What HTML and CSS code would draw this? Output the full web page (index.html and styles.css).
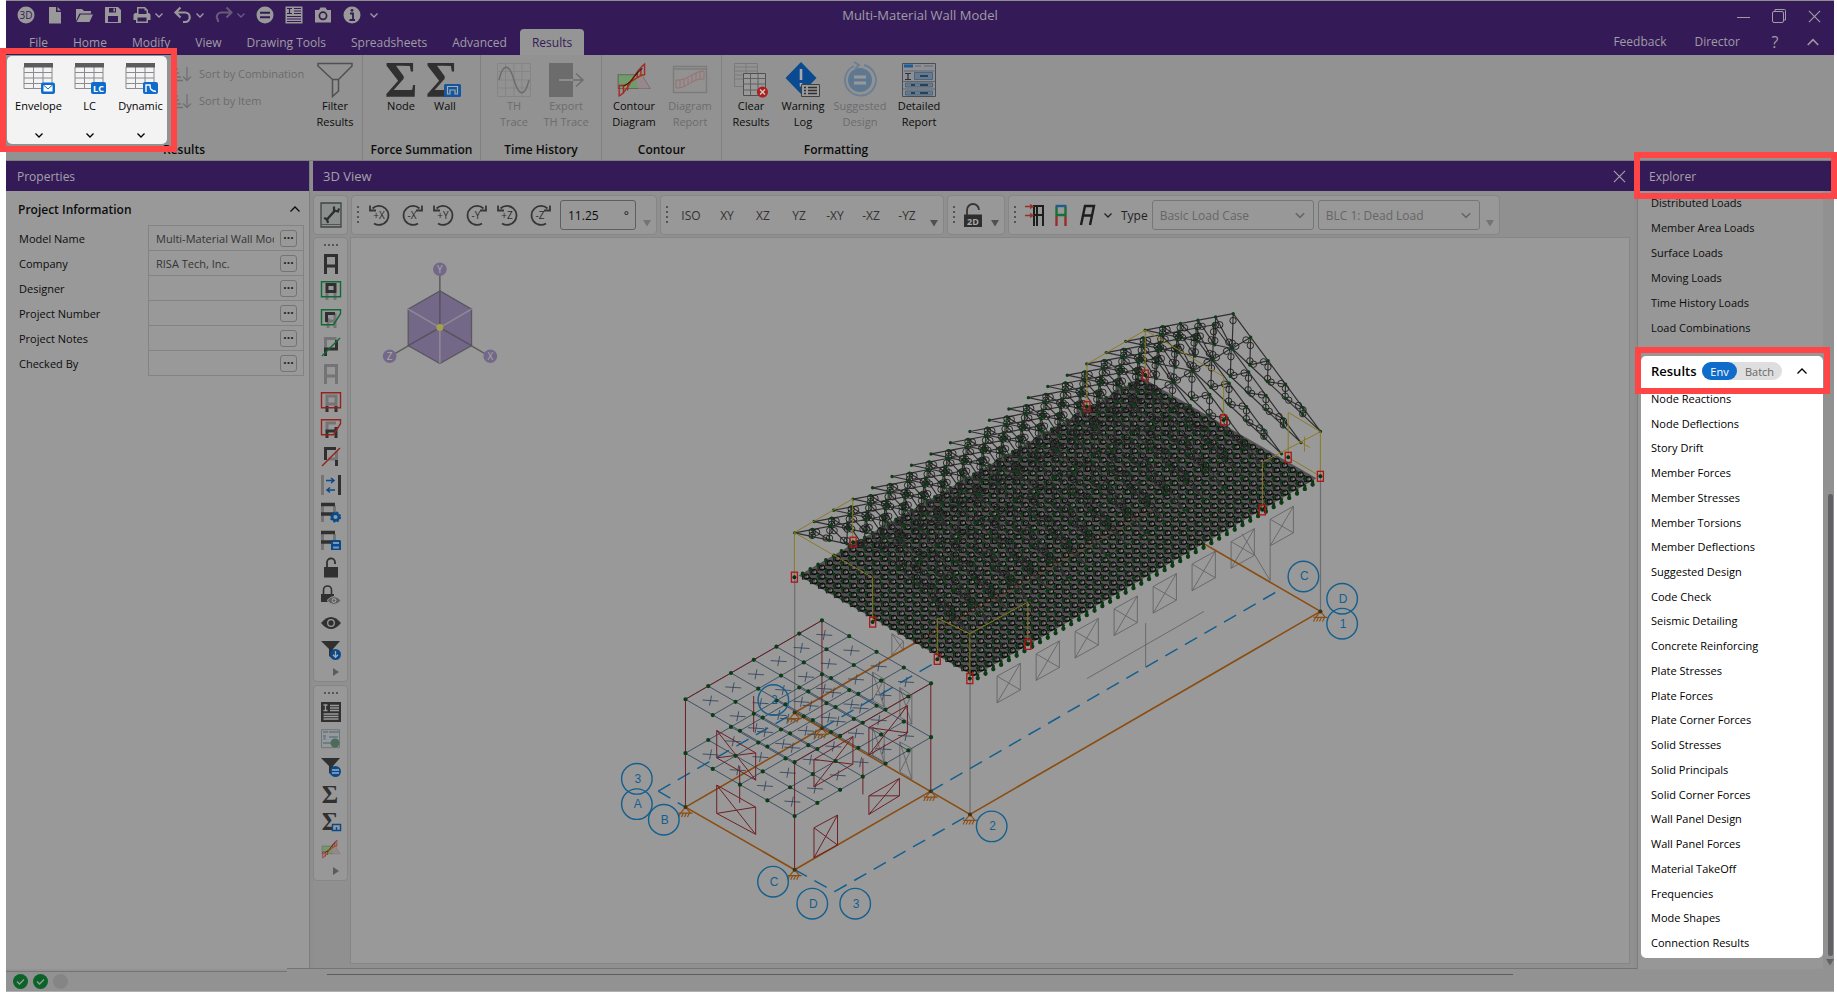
FILE: index.html
```html
<!DOCTYPE html>
<html lang="en">
<head>
<meta charset="utf-8">
<title>Multi-Material Wall Model</title>
<link rel="stylesheet" href="styles.css">
</head>
<body>
<svg class="defs" aria-hidden="true">
  <symbol id="chev" viewBox="0 0 10 10"><path d="M1.500 3.500 5 7l3.500-3.500" fill="none" stroke="currentColor" stroke-width="1.300"/></symbol>
  <symbol id="chev-up" viewBox="0 0 12 12"><path d="M1.500 8.500 6 4l4.500 4.500" fill="none" stroke="currentColor" stroke-width="1.300"/></symbol>
  <symbol id="close" viewBox="0 0 14 14"><path d="M1 1l12 12M13 1 1 13" fill="none" stroke="currentColor" stroke-width="1.200"/></symbol>
  <symbol id="more" viewBox="0 0 8 8"><path d="M0 1h8L4 7.500z" fill="currentColor"/></symbol>
  <symbol id="table" viewBox="0 0 34 34"><path d="M2 6v21.500h28V6M2 11.500h28M2 17h28M2 22.500h28M11.500 6v21.500M21 6v21.500" fill="none" stroke="#8a8a90"/><path d="M2 2h29v4.500H2z" fill="#5c5c5c"/></symbol>
  <symbol id="ccw" viewBox="0 0 24 24"><path d="M4.500 5.500A9.500 9.500 0 1 1 6 20.500M2 2.500v5h6" fill="none" stroke="#363636" stroke-width="1.800"/></symbol>
  <symbol id="cw" viewBox="0 0 24 24"><path d="M19.500 5.500A9.500 9.500 0 1 0 18 20.500M22 2.500v5h-6" fill="none" stroke="#363636" stroke-width="1.800"/></symbol>
  <symbol id="contour" viewBox="0 0 32 34"><path d="M1 12h22l8 13H1z" fill="#6f9c6a" stroke="#68635c"/><path d="M17 12h6l8 13H20z" fill="#98888e"/><path d="M8 25c3-6 9-12 17-13" stroke="#a09a50" stroke-width="3" fill="none"/><path d="M2 22v10c9-4 13-22 24-30v10C18 12 12 24 2 22M6 22v8M10 20v7M19 9v6M22.500 5v8" fill="none" stroke="#a52828" stroke-width="1.300"/><path d="M6 23C15 19 15 12 24 6" stroke="#2b1a1a" fill="none"/></symbol>
</svg>
<div class="app">
  <header class="titlebar">
    <div class="qat">
      <button aria-label="RISA-3D"><svg width="18" height="18" viewBox="0 0 18 18"><circle cx="9" cy="9" r="8.500" fill="#999"/><text x="9" y="13" class="i3d">3D</text></svg></button>
      <button aria-label="New"><svg width="18" height="18" viewBox="0 0 18 18"><path d="M3 1h7v5h5v11.500H3zM11.500 1 15 4.500h-3.500z" fill="#999"/></svg></button>
      <button aria-label="Open"><svg width="18" height="18" viewBox="0 0 18 18"><path d="M1 15V3h6l2 2h7v2.500H4.500zM5.500 8.500H18L14.500 16H1.500z" fill="#999"/></svg></button>
      <button aria-label="Save"><svg width="18" height="18" viewBox="0 0 18 18"><path fill-rule="evenodd" d="M1 1h13l3 3v13H1zM5 2v4.500h7V2zM4 10v6h10v-6z" fill="#999"/><path d="M9.500 2.500h1.500v3H9.500z" fill="#999"/></svg></button>
      <span class="split"><button aria-label="Print"><svg width="18" height="18" viewBox="0 0 18 18"><path fill-rule="evenodd" d="M4 1h8l3 3v3h1l1.500 1.500V14H15v3H3v-3H.500V8.500L2 7h2zM5.500 2.500V8h8V4.500h-2v-2zM4.500 11.500v4h9v-4z" fill="#999"/></svg></button><button class="drop" aria-label="Print options"><svg width="10" height="10"><use href="#chev"/></svg></button></span>
      <span class="split"><button aria-label="Undo"><svg width="18" height="18" viewBox="0 0 18 18"><path d="M2 6.500h9a4.500 4.500 0 0 1 0 9.500H9M6.500 1.500l-5 5 5 5" fill="none" stroke="#999" stroke-width="2.200"/></svg></button><button class="drop" aria-label="Undo history"><svg width="10" height="10"><use href="#chev"/></svg></button></span>
      <span class="split dim"><button aria-label="Redo"><svg width="18" height="18" viewBox="0 0 18 18"><path d="M16 6.500H7A4.500 4.500 0 0 0 3 14v2M11.500 1.500l5 5-5 5" fill="none" stroke="#999" stroke-width="2"/></svg></button><button class="drop" aria-label="Redo history"><svg width="10" height="10"><use href="#chev"/></svg></button></span>
      <button aria-label="Solve"><svg width="18" height="18" viewBox="0 0 18 18"><circle cx="9" cy="9" r="8.500" fill="#999"/><path d="M4 6.800h10M4 11.200h10" stroke="#341b57" stroke-width="2"/></svg></button>
      <button aria-label="Report"><svg width="18" height="18" viewBox="0 0 18 18"><path d="M.500.500h17v17H.500z" fill="#999"/><path d="M2 2.500h5M2 7.500h5M4.500 2.500v5M9 2.500h7M9 5h7M9 7.500h7M2 10.500h14M2 13h14M2 15.500h14" stroke="#341b57" stroke-width="1.200"/></svg></button>
      <button aria-label="Snapshot"><svg width="18" height="18" viewBox="0 0 18 18"><path d="M1 4h4l1.500-2.500h5L13 4h4v12.500H1z" fill="#999"/><circle cx="9" cy="9.800" r="3.600" fill="none" stroke="#341b57" stroke-width="1.700"/></svg></button>
      <button aria-label="Information"><svg width="18" height="18" viewBox="0 0 18 18"><circle cx="9" cy="9" r="8.500" fill="#999"/><path d="M7 7.500h3v6M6.500 14h5.500" stroke="#341b57" stroke-width="1.800" fill="none"/><circle cx="9" cy="4.300" r="1.400" fill="#341b57"/></svg></button>
      <button class="drop" aria-label="Customize toolbar"><svg width="10" height="10"><use href="#chev"/></svg></button>
    </div>
    <h1>Multi-Material Wall Model</h1>
    <div class="winbtns">
      <button aria-label="Minimize"><svg width="14" height="14"><path d="M0 8.500h13" stroke="currentColor"/></svg></button>
      <button aria-label="Restore"><svg width="16" height="16" viewBox="0 0 16 16" fill="none" stroke="currentColor"><rect x="1.500" y="3.500" width="11" height="11" rx="1.500"/><path d="M4 3V1.500h9.500a1 1 0 0 1 1 1V12H13"/></svg></button>
      <button aria-label="Close"><svg width="13" height="13"><use href="#close"/></svg></button>
    </div>
  </header>
  <nav class="tabs">
    <a href="#file">File</a><a href="#home">Home</a><a href="#modify">Modify</a><a href="#view">View</a><a href="#draw">Drawing Tools</a><a href="#sheets">Spreadsheets</a><a href="#advanced">Advanced</a><a href="#results" class="active">Results</a>
    <span class="tabs-right"><a href="#feedback">Feedback</a><a href="#director">Director</a><button class="help" aria-label="Help">?</button><button aria-label="Collapse ribbon"><svg width="14" height="14"><use href="#chev-up"/></svg></button></span>
  </nav>

  <section class="ribbon">
    <div class="group g-results">
      <div class="tools">
        <div class="spot">
          <button><svg width="34" height="34"><use href="#table"/><g><rect x="19" y="21.500" width="14" height="11.500" rx="2" fill="#0f6ccb"/><path d="M21.500 24h9v6.500h-9z" fill="#fff"/><path d="M21.500 24l4.500 4 4.500-4" fill="none" stroke="#0f6ccb"/></g></svg><span>Envelope</span><svg class="dd" width="10" height="10"><use href="#chev"/></svg></button>
          <button><svg width="34" height="34"><use href="#table"/><rect x="18" y="21" width="15" height="12" rx="2" fill="#0f6ccb"/><text x="25.500" y="30.500" class="lc">LC</text></svg><span>LC</span><svg class="dd" width="10" height="10"><use href="#chev"/></svg></button>
          <button><svg width="34" height="34"><use href="#table"/><rect x="19" y="21" width="15" height="12" rx="2" fill="#0f6ccb"/><path d="M22 31v-7h4c0 4 1 6 6 6.500" fill="none" stroke="#fff" stroke-width="1.400"/></svg><span>Dynamic</span><svg class="dd" width="10" height="10"><use href="#chev"/></svg></button>
        </div>
        <div class="sorts">
          <button disabled><svg width="16" height="16"><path d="M0 3h3M0 7h4M0 11h6M0 14.500h8M12 1v13M8 10.500l4 4 4-4" fill="none" stroke="#717171" stroke-width="1.300"/></svg>Sort by Combination</button>
          <button disabled><svg width="16" height="16"><path d="M0 3h3M0 7h4M0 11h6M0 14.500h8M12 1v13M8 10.500l4 4 4-4" fill="none" stroke="#717171" stroke-width="1.300"/></svg>Sort by Item</button>
        </div>
        <button><svg width="36" height="36" viewBox="0 0 36 36"><path d="M1 1.500h34v2.500L21.500 17.500V29l-6 5.500v-17L1 4zM15.500 17.500h6" fill="none" stroke="#505050" stroke-width="1.500"/></svg><span>Filter<br>Results</span></button>
      </div>
      <h2>Results</h2>
    </div>
    <div class="group g-force">
      <div class="tools">
        <button><svg width="34" height="36"><text x="17" y="34" class="sigma">Σ</text></svg><span>Node</span></button>
        <button><svg width="34" height="36"><text x="14" y="34" class="sigma">Σ</text><rect x="16" y="22" width="17" height="13" rx="1.500" fill="#1356a0"/><path d="M19.500 32v-7.500h10V32H27v-4h-5v4z" fill="none" stroke="#aaa" stroke-width="1.200"/></svg><span>Wall</span></button>
      </div>
      <h2>Force Summation</h2>
    </div>
    <div class="group g-time">
      <div class="tools">
        <button disabled><svg width="36" height="36" viewBox="0 0 36 36"><path d="M1.500 1.500h33v33h-33zM9.500 2v32M18 2v32M26 2v32M2 9.500h32M2 18h32M2 26h32" fill="none" stroke="#858585"/><path d="M3 18C7 1 13 1 18 18s11 17 15 0" fill="none" stroke="#6c6c6c" stroke-width="1.500"/></svg><span>TH<br>Trace</span></button>
        <button disabled><svg width="36" height="36" viewBox="0 0 36 36"><path d="M1 1h24v34H1z" fill="#6c6c6c"/><path d="M11 18h14" stroke="#999" stroke-width="1.500"/><path d="M25 18h9M28 11.500l7 6.500-7 6.500" fill="none" stroke="#6c6c6c" stroke-width="1.500"/></svg><span>Export<br>TH Trace</span></button>
      </div>
      <h2>Time History</h2>
    </div>
    <div class="group g-contour">
      <div class="tools">
        <button><svg width="36" height="36"><use href="#contour"/></svg><span>Contour<br>Diagram</span></button>
        <button disabled><svg width="36" height="36" viewBox="0 0 36 36"><path d="M1.500 4.500h33v26h-33zM1.500 7h33" fill="none" stroke="#7c7c7c" stroke-width="1.400"/><path d="M4 18v8c11 1 16-10 28-9V9c-11 0-16 10-28 9M8 18v8M12 17v8M16 16v7M20 13v7M24 11v7M28 10v7" fill="none" stroke="#98706f"/></svg><span>Diagram<br>Report</span></button>
      </div>
      <h2>Contour</h2>
    </div>
    <div class="group g-format">
      <div class="tools">
        <button><svg width="36" height="36" viewBox="0 0 36 36"><path d="M1.500 1.500h23v23h-23zM2 5h22M2 9h22M2 13h22M2 17h22M13 2v22" fill="none" stroke="#7b7b7b"/><path d="M10.500 11.500h22v22h-22z" fill="#999" stroke="#505050"/><path d="M10.500 16.500h22M10.500 22h22M10.500 28h22M17.500 12v21M25 12v21" stroke="#606060"/><circle cx="29.500" cy="30" r="5.500" fill="#ae1c1c"/><path d="M27 27.500l5 5m0-5-5 5" stroke="#ccc" stroke-width="1.400"/></svg><span>Clear<br>Results</span></button>
        <button><svg width="36" height="36" viewBox="0 0 36 36"><path d="M16 0l15.500 16L16 32 .500 16z" fill="#0a4a90"/><path d="M16 7v11M16 21v3.500" stroke="#aaa" stroke-width="2.600"/><path d="M16.500 22.500h18v12h-18z" fill="#999" stroke="#404040"/><path d="M19 25.500h2M23 25.500h9M19 28.500h2M23 28.500h9M19 31.500h2M23 31.500h9" stroke="#303030" stroke-width="1.500"/></svg><span>Warning<br>Log</span></button>
        <button disabled><svg width="36" height="36" viewBox="0 0 36 36"><circle cx="18" cy="18" r="12" fill="#5f7892"/><path d="M12 15h12M12 21h12" stroke="#999" stroke-width="3.200"/><path d="M22 3A15.500 15.500 0 1 1 12 4M12 0l5 3-4 4M24 33l-4 .5" fill="none" stroke="#6b7f93" stroke-width="1.800"/></svg><span>Suggested<br>Design</span></button>
        <button><svg width="36" height="36" viewBox="0 0 36 36"><path d="M1.500 1.500h33v33h-33z" fill="#8c9096" stroke="#4a4e52"/><path d="M3 4h9" stroke="#1d5c94" stroke-width="3"/><path d="M14 4h6M23 4h9M3 9h30M2 19.500h32M2 27h32" stroke="#62666a"/><path d="M4 11.500h6M4 17.500h6M7 11.500v6" stroke="#333" stroke-width="1.200"/><path d="M13.500 10.500h18v7h-18zM4.500 21h27v4h-27zM4.500 29h27v4h-27z" fill="#667b90" stroke="#4e6478"/><path d="M19 14h8M10 23h4M19 23h8M10 31h4M19 31h8" stroke="#26415c" stroke-width="2"/></svg><span>Detailed<br>Report</span></button>
      </div>
      <h2>Formatting</h2>
    </div>
  </section>

  <main class="work">
    <section class="properties">
      <h2 class="bar">Properties</h2>
      <div class="sub"><h3>Project Information</h3><button aria-label="Collapse"><svg width="12" height="12"><use href="#chev-up"/></svg></button></div>
      <div class="prop"><label for="p1">Model Name</label><div><input id="p1" value="Multi-Material Wall Model"><button aria-label="Edit model name">···</button></div></div>
      <div class="prop"><label for="p2">Company</label><div><input id="p2" value="RISA Tech, Inc."><button aria-label="Edit company">···</button></div></div>
      <div class="prop"><label for="p3">Designer</label><div><input id="p3"><button aria-label="Edit designer">···</button></div></div>
      <div class="prop"><label for="p4">Project Number</label><div><input id="p4"><button aria-label="Edit project number">···</button></div></div>
      <div class="prop"><label for="p5">Project Notes</label><div><input id="p5"><button aria-label="Edit project notes">···</button></div></div>
      <div class="prop"><label for="p6">Checked By</label><div><input id="p6"><button aria-label="Edit checked by">···</button></div></div>
    </section>

    <section class="view">
      <div class="bar"><h2>3D View</h2><button aria-label="Close view"><svg width="13" height="13"><use href="#close"/></svg></button></div>
      <div class="toolrow">
        <div class="box wrench"><button aria-label="Settings"><svg width="22" height="26" viewBox="0 0 22 26"><path d="M1 1h20v24H1z" fill="#89908d" stroke="#3f4443" stroke-width="1.300"/><path d="M1 22.500h20" stroke="#555"/><path d="M6 18.500 15.500 8" stroke="#2e2e2e" stroke-width="2.400"/><path d="M14 4.500v4l4 1 1-3M4 16l3 1 1 4" fill="none" stroke="#2e2e2e" stroke-width="2.200"/></svg></button></div>
        <div class="box rot"><i class="grip"></i>
          <button aria-label="Rotate +X"><svg width="24" height="26"><use href="#ccw" width="24" height="24" y="1"/><text x="11" y="17" class="ax">+X</text></svg></button>
          <button aria-label="Rotate -X"><svg width="24" height="26"><use href="#cw" width="24" height="24" y="1"/><text x="12" y="17" class="ax">-X</text></svg></button>
          <button aria-label="Rotate +Y"><svg width="24" height="26"><use href="#ccw" width="24" height="24" y="1"/><text x="11" y="17" class="ax">+Y</text></svg></button>
          <button aria-label="Rotate -Y"><svg width="24" height="26"><use href="#cw" width="24" height="24" y="1"/><text x="12" y="17" class="ax">-Y</text></svg></button>
          <button aria-label="Rotate +Z"><svg width="24" height="26"><use href="#ccw" width="24" height="24" y="1"/><text x="11" y="17" class="ax">+Z</text></svg></button>
          <button aria-label="Rotate -Z"><svg width="24" height="26"><use href="#cw" width="24" height="24" y="1"/><text x="12" y="17" class="ax">-Z</text></svg></button>
          <label class="angle"><input value="11.25" aria-label="Rotation angle">°</label>
          <svg class="more faint" width="8" height="8"><use href="#more"/></svg>
        </div>
        <div class="box planes"><i class="grip"></i><button>ISO</button><button>XY</button><button>XZ</button><button>YZ</button><button>-XY</button><button>-XZ</button><button>-YZ</button><svg class="more" width="8" height="8"><use href="#more"/></svg></div>
        <div class="box lock"><i class="grip"></i><button aria-label="Lock 2D"><svg width="20" height="26" viewBox="0 0 20 26"><path d="M4 14V8a6 6 0 0 1 12 0" fill="none" stroke="#363636" stroke-width="1.800"/><path d="M1 12.500h18V25H1z" fill="#2e2e2e"/><text x="10" y="22.500" class="t2d">2D</text></svg></button><svg class="more" width="8" height="8"><use href="#more"/></svg></div>
        <div class="box loads"><i class="grip"></i>
          <button aria-label="Show loads"><svg width="20" height="22" viewBox="0 0 20 22" fill="none"><path d="M9 22V2h9v20M9 11h9M12 2v20" stroke="#1d1d1d" stroke-width="2"/><path d="M0 2.500h8M5 .500l3 2-3 2M0 11.500h8M5 9.500l3 2-3 2" stroke="#953029" stroke-width="1.300"/></svg></button>
          <button aria-label="Color by material"><svg width="20" height="22" viewBox="0 0 20 22" fill="none" stroke-width="2.400"><path d="M5.500 22V12M14.500 22V12" stroke="#953029"/><path d="M5.500 12V3M14.500 12V3M5 11h10" stroke="#17703a"/><path d="M4.500 2h11" stroke="#1f5a92"/></svg></button>
          <button aria-label="Rendering"><svg width="20" height="22" viewBox="0 0 20 22" fill="none"><path d="M4 21 8 2h9l-4 19M6 11.500h9" stroke="#1d1d1d" stroke-width="2.400"/></svg></button>
          <button class="tiny" aria-label="Rendering options"><svg width="10" height="10"><use href="#chev"/></svg></button>
          <label for="type">Type</label>
          <span class="sel"><select id="type" disabled><option>Basic Load Case</option></select><svg width="12" height="12"><use href="#chev"/></svg></span>
          <span class="sel"><select aria-label="Load case" disabled><option>BLC 1: Dead Load</option></select><svg width="12" height="12"><use href="#chev"/></svg></span>
          <svg class="more faint" width="8" height="8"><use href="#more"/></svg>
        </div>
      </div>
      <div class="stage">
        <div class="side">
          <div class="vbox tall" id="side1"><i class="hgrip"></i></div>
          <div class="vbox short" id="side2"><i class="hgrip"></i></div>
        </div>
        <div class="canvas"><svg id="scene" viewBox="350 237 1280 726" role="img" aria-label="Isometric wall model"></svg></div>
      </div>
    </section>

    <aside class="explorer">
      <div class="exp-head"><h2 class="bar">Explorer</h2></div>
      <div class="exp-body">
        <ul class="loads-list"><li><a href="#dl">Distributed Loads</a></li><li><a href="#mal">Member Area Loads</a></li><li><a href="#sl">Surface Loads</a></li><li><a href="#ml">Moving Loads</a></li><li><a href="#thl">Time History Loads</a></li><li><a href="#lc">Load Combinations</a></li></ul>
        <div class="card">
          <div class="card-head"><h3>Results</h3><div class="toggle"><button class="on">Env</button><button>Batch</button></div><button class="fold" aria-label="Collapse results"><svg width="12" height="12"><use href="#chev-up"/></svg></button></div>
          <ul><li><a href="#r1">Node Reactions</a></li><li><a href="#r2">Node Deflections</a></li><li><a href="#r3">Story Drift</a></li><li><a href="#r4">Member Forces</a></li><li><a href="#r5">Member Stresses</a></li><li><a href="#r6">Member Torsions</a></li><li><a href="#r7">Member Deflections</a></li><li><a href="#r8">Suggested Design</a></li><li><a href="#r9">Code Check</a></li><li><a href="#r10">Seismic Detailing</a></li><li><a href="#r11">Concrete Reinforcing</a></li><li><a href="#r12">Plate Stresses</a></li><li><a href="#r13">Plate Forces</a></li><li><a href="#r14">Plate Corner Forces</a></li><li><a href="#r15">Solid Stresses</a></li><li><a href="#r16">Solid Principals</a></li><li><a href="#r17">Solid Corner Forces</a></li><li><a href="#r18">Wall Panel Design</a></li><li><a href="#r19">Wall Panel Forces</a></li><li><a href="#r20">Material TakeOff</a></li><li><a href="#r21">Frequencies</a></li><li><a href="#r22">Mode Shapes</a></li><li><a href="#r23">Connection Results</a></li></ul>
        </div>
      </div>
      <div class="track"><i class="thumb"></i><svg width="8" height="8"><use href="#more"/></svg></div>
    </aside>
  </main>
  <footer class="status">
    <div class="leds"><svg width="15" height="15"><circle cx="7.500" cy="7.500" r="7.500" fill="#0c6329"/><path d="M4 7.500 6.500 10 11 5.500" fill="none" stroke="#999" stroke-width="1.300"/></svg><svg width="15" height="15"><circle cx="7.500" cy="7.500" r="7.500" fill="#0c6329"/><path d="M4 7.500 6.500 10 11 5.500" fill="none" stroke="#999" stroke-width="1.300"/></svg><svg width="15" height="15"><circle cx="7.500" cy="7.500" r="7.500" fill="#858585"/></svg></div>
    <div class="hscroll"><i></i></div>
  </footer>
</div>
<script src="scene.js"></script>
</body>
</html>
```
FILE: styles.css
```css
*, *::before, *::after { box-sizing: border-box; }
html, body { height: 100%; }
body { margin: 0; background: #fff; font-family: "Open Sans", "Noto Sans", sans-serif; font-size: 11px; color: #0c0c0c; overflow: hidden; }
button { border: 0; background: none; padding: 0; margin: 0; font: inherit; color: inherit; display: flex; align-items: center; justify-content: center; }
input, select { font: inherit; color: inherit; border: 0; background: none; padding: 0; margin: 0; min-width: 0; }
a { color: inherit; text-decoration: none; }
h1, h2, h3, ul { margin: 0; padding: 0; font-weight: 400; font-size: inherit; list-style: none; }
svg { display: block; flex: none; overflow: visible; }
.defs { position: absolute; width: 0; height: 0; overflow: hidden; }

.app { height: 100vh; margin: 0 3px 0 6px; display: flex; flex-direction: column; background: #929292; border-top: 1px solid #8f8f8f; }

.titlebar { display: grid; grid-template-columns: 1fr auto 1fr; align-items: center; height: 28px; background: #341b57; color: #a09ca6; }
.titlebar h1 { font-size: 13px; }
.qat { display: flex; gap: 1px; padding-left: 6px; }
.qat button { width: 28px; height: 28px; }
.qat .drop { width: 14px; }
.split { display: flex; margin-right: 2px; }
.split .drop { margin-left: -4px; }
.dim { opacity: .5; }
.i3d { font: 10px "Open Sans", sans-serif; fill: #341b57; text-anchor: middle; }
.winbtns { display: flex; justify-content: flex-end; gap: 22px; padding-right: 13px; padding-top: 2px; }
.winbtns button { width: 14px; }
.winbtns button:nth-child(2) { margin: 0 -1px; }

.tabs { display: flex; gap: 1px; height: 26px; padding-left: 11px; background: #341b57; color: #a09ca6; font-size: 12px; }
.tabs a { padding: 0 12px; line-height: 28px; }
.tabs .active { background: #959595; color: #341b57; border-radius: 4px 4px 0 0; }
.tabs-right { margin-left: auto; display: flex; align-items: center; padding-right: 14px; }
.tabs-right a { line-height: 24px; padding: 0 14px; }
.tabs-right button { width: 14px; margin-left: 24px; }
.tabs-right .help { font-size: 16px; margin-left: 14px; }

.ribbon { display: flex; height: 106px; border-bottom: 1px solid #7d7d7d; background: #929292; }
.group { display: flex; flex-direction: column; justify-content: space-between; border-right: 1px solid #808080; padding-bottom: 1px; }
.group:last-child { border-right: 0; }
.group h2 { text-align: center; font-weight: 600; font-size: 12px; line-height: 18px; }
.tools { display: flex; }
.tools button { flex-direction: column; justify-content: flex-start; line-height: 16px; text-align: center; padding-top: 7px; }
.tools button > span { white-space: nowrap; }
.tools button:disabled { color: #6c6c6c; }
.g-results { width: 357px; }
.g-results > .tools > button { width: 52px; }
.spot { position: relative; display: flex; width: 160px; height: 88px; margin: 1px 0 -4px 1px; padding-left: 6px; background: #f3f3f3; border-radius: 5px; color: #000; }
.spot::after { content: ""; position: absolute; inset: -8px -10px -8px -7px; border: 6px solid #ff4545; }
.spot button { width: 51px; padding-top: 5px; }
.spot button > span { margin-top: 3px; }
.spot .dd { margin-top: 16px; }
.sorts { display: flex; flex-direction: column; align-items: flex-start; width: 142px; padding-left: 8px; }
.sorts button { flex-direction: row; gap: 8px; height: 27px; padding: 0; white-space: nowrap; }
.tools .sorts button:first-child { margin-top: 5px; }
.g-force { width: 118px; }
.g-force .tools { padding-left: 16px; }
.g-force button { width: 44px; }
.g-time { width: 121px; }
.g-time .tools { padding-left: 7px; }
.g-time button { width: 52px; }
.g-contour { width: 120px; }
.g-contour .tools { padding-left: 4px; }
.g-contour button { width: 56px; }
.g-format { width: 228px; }
.g-format .tools { padding-left: 3px; }
.g-format button { width: 52px; }
.g-format button:nth-child(3) { width: 62px; }
.g-format button:nth-child(4) { width: 56px; }
.sigma { font: bold 50px "Liberation Serif", serif; fill: #303030; text-anchor: middle; }
.lc { font: bold 9px "Open Sans", sans-serif; fill: #fff; text-anchor: middle; }

.work { flex: 1; min-height: 0; display: grid; grid-template-columns: 304px minmax(0, 1fr) 197px; gap: 3px; background: #8e8e8e; }
.bar { display: flex; align-items: center; justify-content: space-between; height: 30px; padding: 0 11px; background: #341b57; color: #a5a1ab; font-size: 13px; }
.view .bar { padding: 0 8px 0 10px; }
.properties { background: #999; border-right: 1px solid #7d7d7d; }
.properties .bar { font-size: 12px; }
.sub { display: flex; align-items: center; justify-content: space-between; height: 34px; padding: 2px 8px 0 12px; }
.sub h3 { font-weight: 600; font-size: 12px; }
.prop { display: grid; grid-template-columns: 142px 1fr; height: 25px; align-items: center; margin-right: 5px; }
.prop label { padding-left: 13px; }
.prop div { display: flex; align-items: center; gap: 6px; height: 26px; border: 1px solid #838383; padding: 0 6px 0 7px; color: #333; }
.prop input { flex: 1; width: 10px; }
.prop button { width: 17px; height: 17px; border: 1px solid #747474; border-radius: 3px; color: #222; font-size: 12px; font-weight: 700; line-height: 12px; }

.view { display: flex; flex-direction: column; min-width: 0; background: #909090; }
.toolrow { display: flex; gap: 3px; padding: 4px 0 2px; }
.box, .vbox { background: #989898; border: 1px solid #868686; border-radius: 4px; }
.box { position: relative; display: flex; align-items: center; height: 40px; }
.grip { width: 2px; height: 18px; margin: 0 5px; background: repeating-linear-gradient(#555 0 2px, transparent 2px 5px); }
.hgrip { width: 14px; height: 2px; background: repeating-linear-gradient(90deg, #555 0 2px, transparent 2px 4px); }
.more { position: absolute; right: 5px; bottom: 7px; color: #4e5054; }
.faint { color: #727478; }
.wrench { width: 35px; justify-content: center; }
.rot { width: 306px; }
.rot button { width: 24px; margin-right: 8px; }
.rot .grip { margin-right: 9px; }
.ax { font: 10px "Open Sans", sans-serif; fill: #2c2c2c; text-anchor: middle; }
.angle { display: flex; align-items: center; width: 76px; height: 30px; border: 1px solid #5e5e5e; border-radius: 3px; padding: 0 6px 0 7px; font-size: 12px; }
.angle input { flex: 1; width: 20px; }
.planes { width: 284px; font-size: 12px; color: #333; }
.planes button { width: 36px; }
.lock { width: 58px; }
.lock .grip { margin-right: 8px; }
.t2d { font: bold 9px "Open Sans", sans-serif; fill: #aaa; text-anchor: middle; }
.loads { width: 492px; font-size: 12px; color: #222; }
.loads .grip { margin-right: 9px; }
.loads button { width: 20px; margin-right: 6px; }
.loads .tiny { width: 10px; margin-right: 8px; }
.sel { position: relative; width: 162px; height: 30px; margin-left: 4px; }
.sel select { appearance: none; width: 100%; height: 100%; border: 1px solid #767676; border-radius: 3px; padding-left: 7px; color: #666; opacity: 1; }
.sel svg { position: absolute; right: 8px; top: 9px; color: #666; }

.stage { flex: 1; min-height: 0; display: flex; gap: 2px; padding: 0 4px 5px 0; }
.side { width: 35px; display: flex; flex-direction: column; gap: 3px; }
.vbox { display: flex; flex-direction: column; align-items: center; justify-content: space-between; padding: 6px 0 5px; }
.tall { height: 445px; }
.short { height: 196px; }
.vbox .arrow { align-self: flex-end; margin-right: 8px; }
.mini { width: 22px; height: 20px; }
.canvas { flex: 1; min-width: 0; background: #999; border: 1px solid #868686; }
.canvas svg { width: 100%; height: 100%; }
.tag { font: 12px "Liberation Sans", sans-serif; fill: #135f8e; text-anchor: middle; }
.cube { font: 10px "Open Sans", sans-serif; fill: #aaa; text-anchor: middle; }
.small-sigma { font: bold 25px "Liberation Serif", serif; fill: #303030; text-anchor: middle; }

.explorer { position: relative; display: flex; flex-direction: column; min-height: 0; background: #979797; border-left: 1px solid #7d7d7d; }
.exp-head { position: relative; z-index: 1; }
.exp-head .bar { font-size: 12px; }
.exp-head::after { content: ""; position: absolute; inset: -9px -3px -8px -4px; border: 6px solid #ff4545; }
.exp-body { flex: 1; min-height: 0; display: flex; flex-direction: column; margin-right: 11px; padding: 0 0 11px 3px; }
.loads-list { height: 165px; padding-left: 10px; }
.loads-list li { height: 25px; line-height: 24px; }
.card { position: relative; z-index: 1; flex: 1; min-height: 0; display: flex; flex-direction: column; background: #fff; border-radius: 5px; color: #000; padding: 0 10px 3px; }
.card-head { display: flex; align-items: center; height: 30px; }
.card-head::after { content: ""; position: absolute; height: 47px; top: -9px; left: -6px; right: -7px; border: 6px solid #ff4545; pointer-events: none; }
.card-head h3 { font-weight: 600; font-size: 13px; width: 51px; }
.toggle { display: flex; width: 80px; height: 18px; background: #dedede; border-radius: 9px; color: #666; }
.toggle button { width: 45px; }
.toggle .on { width: 35px; border-radius: 9px; background: #0f6ccb; color: #fff; }
.fold { margin-left: auto; margin-right: 5px; }
.card ul { flex: 1; min-height: 0; display: flex; flex-direction: column; }
.card li { flex: 1; min-height: 0; display: flex; align-items: center; }
.track { position: absolute; right: 0; top: 30px; bottom: 0; width: 11px; background: #919191; }
.track .thumb { position: absolute; top: 39%; right: 1px; bottom: 13px; width: 5px; border-radius: 3px; background: #616165; }
.track svg { position: absolute; bottom: 3px; right: 0; color: #616165; }

.status { display: flex; height: 24px; border-bottom: 1px solid #b0b0b0; }
.leds { display: flex; gap: 5px; width: 281px; margin-top: 3px; padding: 2px 0 0 7px; border-top: 1px solid #747474; }
.hscroll { flex: 1; border-top: 1px solid #747474; padding: 5px 321px 0 40px; }
.hscroll i { display: block; height: 1px; background: #5b5b5b; }
```
FILE: scene.js
```javascript
const svg = document.getElementById('scene');
const out = [];
const lerp = (a, b, t) => [a[0] + (b[0] - a[0]) * t, a[1] + (b[1] - a[1]) * t];
const f = n => n.toFixed(1);
const seg = (a, b) => `M${f(a[0])} ${f(a[1])}L${f(b[0])} ${f(b[1])}`;
const dot = (p, r) => `M${f(p[0] - r)} ${f(p[1])}a${r} ${r} 0 1 0 ${2 * r} 0a${r} ${r} 0 1 0 ${-2 * r} 0`;
const path = (d, stroke, w = 1, extra = '') => out.push(`<path d="${d}" fill="none" stroke="${stroke}" stroke-width="${w}" ${extra}/>`);
const fill = (d, color) => out.push(`<path d="${d}" fill="${color}"/>`);
// A: lower block coordinates, B: main hall coordinates
const A = (x, y) => [600 + x / 3, 580 + y / 3];
const B = (x, y) => [780 + x / 2.703, 290 + y / 3];
const poly = pts => pts.slice(1).map((p, i) => seg(pts[i], p)).join('');
const panel = (l, r, t1, b1, t2, b2, P) => {
  const q = [P(l, t1), P(r, t2), P(r, b2), P(l, b1)];
  return poly([...q, q[0]]) + seg(q[0], q[2]) + seg(q[3], q[1]);
};

// view cube
const c = [439, 326.7];
const hex = [[439, 290], [470.7, 308.3], [470.7, 344.7], [439, 362.7], [407.3, 344.7], [407.3, 308.3]];
path(seg(c, [439, 270]) + seg(c, [390, 355]) + seg(c, [488, 355]), '#5c5c5c', 1.5);
out.push(`<polygon points="${hex.join(' ')}" fill="#746889" stroke="#5a5760" stroke-width="1.300"/>`);
path(seg(c, hex[0]) + seg(c, hex[2]) + seg(c, hex[4]), '#58515f', 1.5);
path(seg(c, hex[1]) + seg(c, hex[3]) + seg(c, hex[5]), '#8f8a96', 1.5);
out.push(`<circle cx="439" cy="326.700" r="3.500" fill="#a3a14f"/>`);
[['Y', 439, 268.3], ['Z', 388.7, 355.5], ['X', 489.5, 355.5]].forEach(([t, x, y]) =>
  out.push(`<circle cx="${x}" cy="${y}" r="6.800" fill="#746889"/><text x="${x}" y="${y + 3.7}" class="cube">${t}</text>`));

// openings in the long wall
let d = '';
for (let i = 0; i < 8; i++) {
  const x = 1326 - i * 105.6, y = 686 + i * 67.4;
  d += panel(x, x + 63, y, y + 80, y - 39, y + 41, B);
}
d += panel(817, 852, 275, 360, 297, 380, A) + panel(899, 935, 322, 410, 345, 432, A) + panel(817, 852, 440, 525, 462, 545, A) + panel(899, 935, 485, 575, 505, 597, A) + panel(875, 910, 160, 225, 182, 210, A);
d += seg(B(830, 1165), B(1147, 963)) + seg(B(989, 998), B(989, 1130)) + seg(B(1326, 767), B(1326, 870)) + seg(B(1250, 730), B(1326, 870));
path(d, '#646464', .9);
path(seg([794.4, 577], [794.4, 712]) + seg([970, 678], [970, 814]) + seg([1321, 475], [1321, 611]), '#6c6c6c', 1.2);

// grid lines
path(poly([A(173, 633), A(583, 397)]) + poly([A(665, 444), A(1012, 243)]) + seg(A(173, 633), A(255, 681)) + seg([930.7, 791], [1281, 589]) + poly([A(583, 869), A(703, 935)]) + seg(A(703, 935), A(1110, 703)), '#135f8e', 1.5, 'stroke-dasharray="14 8.600"');
// foundations
path(poly([A(255, 681), A(583, 869), A(992, 633)]) + seg(A(255, 681), A(665, 444)) + poly([[1145.5, 509], [794.5, 712.3], [970, 814.3], [1321, 611], [1145.5, 509]]), '#8b4c10', 1.6);

// lower block floors
let green = '', blue = '';
[0, 54].forEach(dy => {
  const L = [685, 699 + dy], K = [821.7, 620 + dy], F = [794.3, 762 + dy];
  const at = (i, j) => [L[0] + (K[0] - L[0]) * i / 6 + (F[0] - L[0]) * j / 4, L[1] + (K[1] - L[1]) * i / 6 + (F[1] - L[1]) * j / 4];
  for (let i = 0; i <= 6; i++) blue += seg(at(i, 0), at(i, 4));
  for (let j = 0; j <= 4; j++) blue += seg(at(0, j), at(6, j));
  for (let i = 0; i <= 6; i++) for (let j = 0; j <= 4; j++) green += dot(at(i, j), 2.1);
  for (let i = 0; i < 6; i++) for (let j = 0; j < 4; j++) {
    const p = at(i + .5, j + .5);
    blue += seg([p[0] - 8, p[1] - .5], [p[0] + 8, p[1] + .5]) + seg([p[0] + 1, p[1] - 5], [p[0] - 1, p[1] + 5]);
  }
});
path(blue, '#35485f', .9);
let red = poly([A(255, 681), A(255, 357), A(665, 120), A(665, 444)]) + poly([A(583, 869), A(583, 545), A(992, 309), A(992, 633)]);
red += seg(A(460, 347), A(460, 455)) + seg(A(418, 558), A(418, 668)) + seg(A(788, 535), A(788, 643));
[[349, 466, 451, 533, 518, 600], [349, 466, 615, 700, 681, 763], [641, 758, 538, 620, 469, 552], [806, 922, 442, 524, 376, 458], [641, 712, 743, 833, 705, 795], [806, 898, 647, 703, 595, 647]].forEach(q => red += panel(...q, A));
path(red, '#6d1f26', 1);
fill(green, '#0d3d16');

// floor deck: joist trusses across the hall
const o = [794.4, 577.3], U = [351, -203], V = [175.5, 101];
const deck = (i, j) => [o[0] + U[0] * i / 45 + V[0] * j / 22, o[1] + U[1] * i / 45 + V[1] * j / 22];
const corners = [deck(.5, 0), deck(44.5, 0), deck(44.5, 22), deck(.5, 22)];
out.push(`<polygon points="${corners.join(' ')}" fill="#333" opacity=".7"/>`);
let chords = '', rings = '', pips = '', pale = '';
for (let i = 1; i <= 44; i++) {
  chords += seg(deck(i, 0), deck(i, 22));
  for (let j = 0; j <= 22; j++) {
    const p = deck(i, j), q = [p[0], p[1] + 6], n = deck(i, Math.min(22, j + 1));
    chords += seg(p, q) + seg(q, n);
    if (j < 22) { const m = deck(i, j + .5); rings += dot([m[0], m[1] + 1], 2.6); pale += dot([m[0] + 1, m[1] + 1], 1.1); }
    pips += dot([p[0], p[1] + (j % 2 ? 3 : 1)], 1.7);
  }
  pips += dot([deck(i, 22)[0], deck(i, 22)[1] + 4], 2.2) + dot(deck(i, 0), 1.8);
}
path(chords, '#151515', 1);
path(rings, '#0d0d0d', 1.1);
fill(pale, '#858585');
fill(pips, '#0b3a13');
path(seg(B(355, 1065), B(1010, 660)), '#7a4318', 1, 'stroke-dasharray="4 3" opacity=".7"');

// roof trusses
let members = '', hoops = '', joints = '';
for (let k = 0; k <= 18; k++) {
  const s = [19.5 * k, -11.28 * k];
  const mv = p => [p[0] + s[0], p[1] + s[1]];
  const e1 = mv([794.4, 532.3]), e2 = mv([970, 633.7]), ridge = mv([882.6, 515.7]), mid = mv([881.5, 550.7]);
  [e1, e2].forEach(e => {
    members += seg(e, ridge) + seg(e, mid);
    for (let n = 1; n <= 4; n++) {
      const t = lerp(e, ridge, n / 5), b = lerp(e, mid, n / 5), b2 = lerp(e, mid, (n + 1) / 5);
      members += seg(t, b) + seg(t, b2);
      hoops += dot(lerp(t, b, .3), 3.2) + dot(lerp(t, b, .85), 3.2) + dot(lerp(t, b2, .8), 3.2) + dot(lerp(t, b2, .25), 3.2);
      joints += dot(t, 1.7) + dot(b, 1.7);
    }
    joints += dot(e, 1.7);
  });
  members += seg(ridge, mid);
  hoops += dot(lerp(ridge, mid, .2), 3.2) + dot(lerp(ridge, mid, .85), 3.2);
  joints += dot(ridge, 1.7) + dot(mid, 1.7);
}
path(members, '#303030', 1.2);
path(hoops, '#1b1b1b', .9);
fill(joints, '#0d3d16');

// wall outlines
const yl = [[[38, 860], [38, 726], [196, 625], [196, 755]], [[38, 726], [250, 862], [250, 995]], [[425, 1107], [425, 983], [513, 1030], [670, 935], [670, 1062]], [[513, 1030], [513, 1165]], [[830, 348], [830, 220], [988, 118], [988, 253]], [[988, 118], [1200, 258], [1200, 388]], [[1462, 557], [1462, 423], [1305, 515], [1305, 658]], [[1375, 500], [1375, 365], [1462, 423]], [[1375, 500], [1462, 557]], [[1419, 438], [1419, 483]], [[1405, 452], [1433, 470]]];
path(yl.map(l => poly(l.map(p => B(...p)))).join(''), '#8a7a22', 1);
[[38, 860], [197, 755], [250, 995], [425, 1107], [513, 1165], [670, 1062], [830, 348], [988, 253], [1200, 388], [1375, 500], [1462, 557], [1305, 658]].forEach(p => {
  const [x, y] = B(...p);
  out.push(`<rect x="${f(x - 3)}" y="${f(y - 5)}" width="6" height="10" fill="none" stroke="#b01414" stroke-width="1.300"/><circle cx="${f(x)}" cy="${f(y)}" r="2" fill="#0d2d10"/>`);
});

// supports
[A(255, 681), A(583, 869), A(992, 633), A(1110, 703), A(583, 397), A(665, 444), [1321, 611]].forEach(([x, y]) => {
  path(`M${x} ${y}l-5 6h10zM${x - 7} ${y + 6}h14m-12 0l-2 4m5-4l-2 4m5-4l-2 4m5-4l-2 4`, '#8b4c10', 1.1);
  fill(dot([x, y], 2), '#3c3512');
});

// grid bubbles
[['3', ...A(109, 596)], ['A', ...A(109, 672)], ['B', ...A(190, 719)], ['C', ...A(518, 905)], ['D', ...A(636, 971)], ['3', ...A(765, 971)], ['2', ...A(1175, 739)], ['2', ...A(519, 359)], ['C', 1303.9, 576], ['D', 1342.7, 598.3], ['1', 1342.7, 623.3]].forEach(([t, x, y]) =>
  out.push(`<circle cx="${f(x)}" cy="${f(y)}" r="15.300" fill="none" stroke="#135f8e" stroke-width="1.400"/><text x="${f(x + 1)}" y="${f(y + 4)}" class="tag">${t}</text>`));
svg.innerHTML = out.join('');

// side toolbars
const K = '#303030', G = '#747474', E = '#0f6a38', R = '#94231d', N = '#0a4a8c';
const ln = (d, s, w = 3) => `<path d="${d}" fill="none" stroke="${s}" stroke-width="${w}"/>`;
const frame = s => ln('M5.500 20V1.500h11V20M5.500 12h11', s);
const fr2 = ln('M2.500 4v16M14.500 4v9', G) + ln('M1 2.500h14M1 12h12', K, 3.4);
const sideA = [
  ['Select all', frame(K)],
  ['Box select', ln('M7 12v7M15 12v7', G) + ln('M7 3.500h8v7H7z', K) + ln('M1.500.700h19v15h-19z', E, 1.4)],
  ['Polygon select', ln('M8 19V9M15 19V4M8 12h7', G) + ln('M6.500 13V4.500H15', K) + ln('M1.500.700h19v4l-7 11h-12z', E, 1.4)],
  ['Line select', ln('M5.500 19V1.500h11', G) + ln('M5.500 19v-7h11V3', K) + ln('M2 19 20 1', E, 1.4)],
  ['Unselect all', frame(G)],
  ['Box unselect', ln('M7 14V4h9v10M7 12h9', G) + ln('M7 14v6M16 14v6', K) + ln('M1.500.700h19v15h-19z', R, 1.4)],
  ['Polygon unselect', ln('M7 12V4h9', G) + ln('M7 19v-7h9M16 8v11', K) + ln('M1.500.700h19v4l-7 11h-12z', R, 1.4)],
  ['Line unselect', ln('M16.500 4v8h-8', G) + ln('M5.500 13V1.500H16M16.500 13v6', K) + ln('M2 19 20 1', R, 1.4)],
  ['Invert selection', ln('M2.500 0v20', G) + ln('M19.500 0v20', K) + ln('M6 5.500h8M11 3l3 2.500L11 8M15 15H7M10 12.500 7 15l3 2.500', N, 1.5)],
  ['Criteria select', fr2 + `<circle cx="15.500" cy="15" r="3.400" fill="none" stroke="${N}" stroke-width="2.600"/><circle cx="15.500" cy="15" r="4.800" fill="none" stroke="${N}" stroke-width="1.600" stroke-dasharray="2 1.800"/>`],
  ['Save selection', fr2 + `<path d="M11 10h9l1 1v9H11z" fill="${N}"/>` + ln('M13 13h6M13 17.500h6', '#8096ac', 2)],
  ['Unlock', `<path d="M4 9h14v10.500H4z" fill="${K}"/>` + ln('M7 9V5a4 4 0 0 1 8-1v2', K, 1.8)],
  ['Lock unselected', `<path d="M1 9h13v8H1z" fill="${K}"/>` + ln('M3.500 9V5a4 4 0 0 1 8 0v4', K, 1.6) + '<path d="M7 15.500q7-8 14 0-7 8-14 0z" fill="#606060" stroke="#999"/><circle cx="14" cy="15.500" r="1.900" fill="none" stroke="#aaa"/>'],
  ['Show all', `<path d="M1 10q10-12 20 0-10 12-20 0z" fill="${K}"/><circle cx="11" cy="10" r="3.300" fill="none" stroke="#999" stroke-width="1.300"/>`],
  ['Filter down', `<path d="M1 1h19l-7 8v10l-4-3V9z" fill="${K}"/><circle cx="15.500" cy="14.500" r="5.500" fill="${N}"/>` + ln('M15.500 11v6M13 14.800l2.500 2.500 2.500-2.500', '#aaa', 1.3)]
];
const sideB = [
  ['Report', `<path d="M1 0h20v20H1z" fill="${K}"/>` + ln('M10 3.500h9M10 6h9M10 8.500h9M3.500 12h15M3.500 14.500h15M3.500 17h15M3.500 3h4M3.500 8.500h4M5.500 3v5', '#999', 1.3)],
  ['Report printing', ln('M1.500.700h18v18h-18z', '#6f7678', 1) + ln('M3 3h5M9 3h10M3 7h3M4.500 7v4M9 8h9M3 14h9', '#6b7e90', 2) + '<circle cx="15" cy="14" r="4.500" fill="#4d6b5b"/>'],
  ['Filter results', `<path d="M1 1h19l-7 8v10l-4-3V9z" fill="${K}"/><circle cx="15.500" cy="14.500" r="5.500" fill="${N}"/>` + ln('M12 13h7M12 16h7', '#9ab', 1.5)],
  ['Node summation', '<text x="10" y="18.500" class="small-sigma">Σ</text>'],
  ['Wall summation', '<text x="10" y="18" class="small-sigma">Σ</text>' + `<path d="M12.500 12.500h8v6h-8z" fill="#999" stroke="${N}" stroke-width="1.500"/>` + ln('M16.500 15v4', N, 1.5)],
  ['Contour diagram', '<use href="#contour" x="1" width="20" height="20"/>']
];
const build = (id, items) => {
  document.getElementById(id).insertAdjacentHTML('beforeend', items.map(([t, g]) =>
    `<button class="mini" aria-label="${t}"><svg width="22" height="20" viewBox="0 0 22 20">${g}</svg></button>`).join('') +
    '<svg class="arrow" width="7" height="8"><path d="M1 0l6 4-6 4z" fill="#5b5c60"/></svg>');
};
build('side1', sideA);
build('side2', sideB);
```
